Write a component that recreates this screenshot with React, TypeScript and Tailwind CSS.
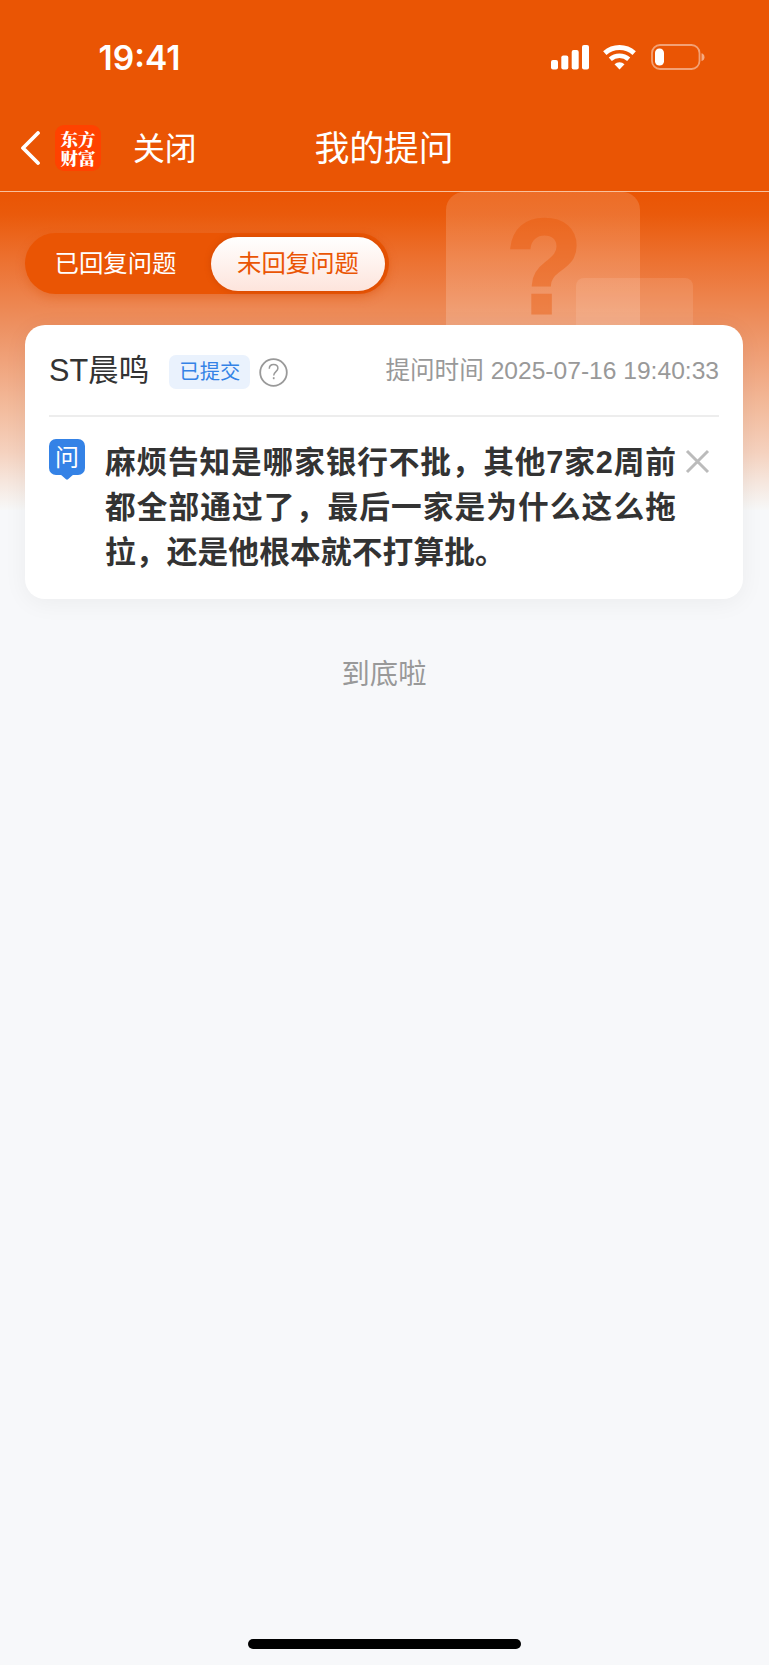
import React from 'react';

const tabs = [
  { id: 'replied', label: '已回复问题' },
  { id: 'pending', label: '未回复问题' }
];

const question = {
  stock: 'ST晨鸣',
  status: '已提交',
  time: '2025-07-16 19:40:33',
  text: '麻烦告知是哪家银行不批，其他7家2周前都全部通过了，最后一家是为什么这么拖拉，还是他根本就不打算批。'
};

function StatusIcons() {
  return (
    <div className="flex items-start">
      <svg width="38" height="25" viewBox="0 0 38 25" fill="#fff">
        <rect x="0" y="15" width="7" height="9.5" rx="2" />
        <rect x="10.3" y="10.5" width="7" height="14" rx="2" />
        <rect x="20.7" y="5" width="7" height="19.5" rx="2" />
        <rect x="31" y="0" width="7" height="24.5" rx="2" />
      </svg>
      <svg className="ml-[14px]" width="34" height="25" viewBox="0 0 34 25" fill="none" stroke="#fff">
        <path d="M1.8 8.2a22 22 0 0 1 29.4 0" strokeWidth="5" />
        <path d="M7.3 14.2a13.8 13.8 0 0 1 18.4 0" strokeWidth="4.6" />
        <path d="M16.5 24.5l-5-5.2a7.3 7.3 0 0 1 10 0z" fill="#fff" stroke="none" />
      </svg>
      <svg className="ml-[13.5px] -mt-px" width="54" height="26" viewBox="0 0 54 26">
        <rect x="1" y="1" width="47.5" height="24" rx="8" fill="none" stroke="#fff" strokeOpacity="0.45" strokeWidth="1.8" />
        <rect x="4" y="4.5" width="9" height="17" rx="4.3" fill="#fff" />
        <path d="M50.5 9.3q3 1 3 3.9t-3 3.9z" fill="#fff" fillOpacity="0.5" />
      </svg>
    </div>
  );
}

function Header() {
  return (
    <header className="h-[192px] bg-[#ea5504] border-b border-[#f9c09c] text-white">
      <div className="h-[112px] flex justify-between pl-[98.5px] pr-[64.5px]">
        <span className="mt-[37px] font-['Inter',sans-serif] text-[33.6px] leading-[42px] font-semibold">19:41</span>
        <div className="mt-[45px]">
          <StatusIcons />
        </div>
      </div>
      <div className="h-[72px] grid grid-cols-[1fr_auto_1fr] items-center">
        <div className="flex items-center pl-[20px]">
          <svg width="21" height="34" viewBox="0 0 21 34" fill="none" stroke="#fff" strokeWidth="3.8" strokeLinecap="round" strokeLinejoin="round">
            <path d="M18 2L3 17l15 15" />
          </svg>
          <div className="ml-[14px] w-[46px] h-[46px] rounded-[9px] bg-[#ff4200] flex items-center justify-center">
            <span className="w-[36px] font-['Noto_Serif_CJK_SC','Noto_Sans_CJK_SC',serif] text-[17.5px] leading-[19px] font-black text-center">东方<br />财富</span>
          </div>
          <span className="ml-[32px] mt-[2px] text-[31.8px] leading-[40px]">关闭</span>
        </div>
        <h1 className="mt-[2px] -ml-px text-[34.8px] leading-[44px]">我的提问</h1>
        <span />
      </div>
    </header>
  );
}

// Decorative cards behind the content
function Watermark() {
  return (
    <div className="absolute left-[446px] top-0 w-[194px] h-[200px] rounded-t-[18px] bg-linear-to-b from-white/14 to-white/20">
      <span className="absolute left-[60px] top-[9px] origin-left scale-x-94 font-['Liberation_Sans',sans-serif] text-[133px] leading-[133px] font-bold text-[#ea5504] opacity-40 [-webkit-text-stroke:3px_#ea5504]">?</span>
      <div className="absolute left-[130px] top-[86px] w-[117px] h-[100px] rounded-t-[8px] bg-white/10" />
    </div>
  );
}

function Tabs() {
  return (
    <div className="relative w-[364px] h-[61px] rounded-full bg-[#ea5504] pl-[3px] pr-[4px] py-[3.5px] flex justify-between shadow-[0_4px_10px_rgba(220,80,10,0.35)] text-[24.4px]">
      {tabs.map((tab) => (
        <button
          key={tab.id}
          className={
            tab.id === 'pending'
              ? 'w-[174px] h-[54px] pt-[2px] rounded-full bg-linear-to-b from-white to-[#fde4dc] text-[#ea5504] shadow-[0_0_6px_rgba(170,50,0,0.4)]'
              : 'w-[174px] h-[54px] pt-[2px] pl-[1px] text-white'
          }
        >
          {tab.label}
        </button>
      ))}
    </div>
  );
}

function QuestionCard() {
  return (
    <section className="relative mt-[30.5px] h-[274px] rounded-[20px] bg-white px-[24px] shadow-[0_4px_24px_rgba(0,0,0,0.05)] text-[#333]">
      <div className="h-[92px] border-b-2 border-[#ededed] flex items-center justify-between">
        <div className="flex items-center">
          <span className="text-[30.6px] leading-[40px]">{question.stock}</span>
          <span className="ml-[20px] mt-[5px] w-[81px] h-[34px] rounded-[7px] bg-[#eaf2fd] text-[#3482e6] text-[20.3px] leading-[34px] text-center">{question.status}</span>
          <svg className="ml-[9px] mt-[6px]" width="29" height="29" viewBox="0 0 29 29" fill="none" stroke="#999" strokeWidth="1.8">
            <circle cx="14.5" cy="14.5" r="13.3" />
            <path d="M10.3 10.7c0-2.6 1.8-4.3 4.3-4.3s4.3 1.6 4.3 3.9c0 3.2-4.2 3.5-4.2 7.2" strokeWidth="1.5" />
            <path d="M14.7 19.2v2" strokeWidth="1.7" />
          </svg>
        </div>
        <span className="mt-[2px] text-[24.6px] leading-[32px] text-[#999]">提问时间 {question.time}</span>
      </div>
      <div className="flex items-start">
        <div className="relative mt-[22px] w-[36px] h-[36px] rounded-[7px] bg-[#3482e6] text-white text-[24px] leading-[37px] text-center">
          问
          <svg className="absolute left-[11px] top-[35px]" width="14" height="6" viewBox="0 0 14 6" fill="#3482e6">
            <path d="M0 0h14L8 5.3q-1 .8-2 0z" />
          </svg>
        </div>
        <p className="ml-[20px] mt-[23px] w-[571px] text-[30.7px] leading-[45px] font-bold text-justify tracking-[0.15px]">{question.text}</p>
        <svg className="ml-[9px] mt-[32px]" width="25" height="25" viewBox="0 0 25 25" stroke="#bbb" strokeWidth="3">
          <path d="M2 2l21 21M23 2L2 23" />
        </svg>
      </div>
    </section>
  );
}

function App() {
  return (
    <div className="relative h-[1665px] overflow-hidden bg-[#f7f8fa] font-['Liberation_Sans','Noto_Sans_CJK_SC',sans-serif]">
      <Header />
      <main className="relative h-[1447px] pl-[25px] pr-[26px] pt-[41px] bg-no-repeat bg-[length:100%_318px] bg-linear-[180deg,#ea5504_0%,#ea5a0b_7%,#ec6f2d_20%,#ed8149_32%,#ed9263_43%,#f0a27a_53%,#f3bd9f_69%,#f5d2bf_82%,#f6e6dd_91%,#f7f8f8_100%]">
        <Watermark />
        <Tabs />
        <QuestionCard />
        <p className="mt-[55px] text-center text-[28.3px] leading-[40px] text-[#999]">到底啦</p>
      </main>
      <div className="mx-auto w-[273px] h-[10px] rounded-full bg-black" />
    </div>
  );
}

export default App;
